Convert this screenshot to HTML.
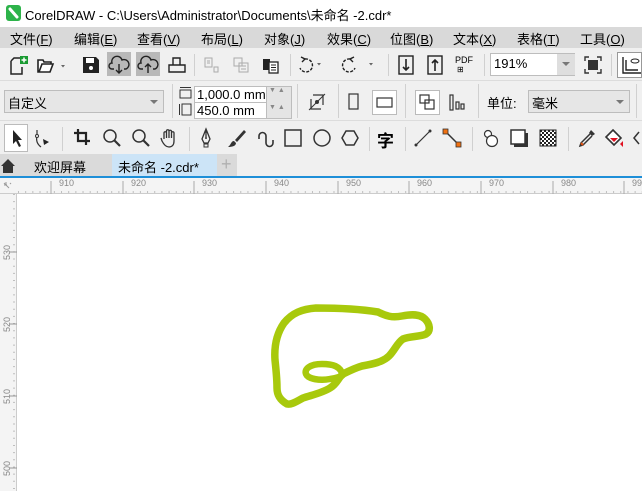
<!DOCTYPE html>
<html><head><meta charset="utf-8"><style>
*{margin:0;padding:0;box-sizing:border-box}
body{width:642px;height:491px;overflow:hidden;background:#fff;font-family:"Liberation Sans","Noto Sans CJK SC",sans-serif;font-size:13px;color:#000;position:relative}
.a{position:absolute}
.t{position:absolute;white-space:nowrap}
.sep{position:absolute;width:1px;background:#d0d0d0}
svg{position:absolute;overflow:visible}
</style></head><body>
<!-- title -->
<div class="a" style="left:0;top:0;width:642px;height:27px;background:#fff"></div>
<div class="a" style="left:6px;top:5px;width:15px;height:16px;background:#2db34a;border-radius:3px"></div>
<svg style="left:6px;top:5px" width="15" height="16"><path d="M4 4 L11 12" stroke="#fff" stroke-width="3" stroke-linecap="round"/></svg>
<div class="t" style="left:25px;top:5px;font-size:13px">CorelDRAW - C:\Users\Administrator\Documents\未命名 -2.cdr*</div>
<!-- menu -->
<div class="a" style="left:0;top:27px;width:642px;height:21px;background:#d9d9d9"></div>
<div class="t" style="left:10px;top:29px">文件(<u>F</u>)</div>
<div class="t" style="left:74px;top:29px">编辑(<u>E</u>)</div>
<div class="t" style="left:137px;top:29px">查看(<u>V</u>)</div>
<div class="t" style="left:201px;top:29px">布局(<u>L</u>)</div>
<div class="t" style="left:264px;top:29px">对象(<u>J</u>)</div>
<div class="t" style="left:327px;top:29px">效果(<u>C</u>)</div>
<div class="t" style="left:390px;top:29px">位图(<u>B</u>)</div>
<div class="t" style="left:453px;top:29px">文本(<u>X</u>)</div>
<div class="t" style="left:517px;top:29px">表格(<u>T</u>)</div>
<div class="t" style="left:580px;top:29px">工具(<u>O</u>)</div>
<!-- toolbar1 -->
<div class="a" style="left:0;top:48px;width:642px;height:33px;background:#f0f0f0;border-bottom:1px solid #dcdcdc"></div>
<svg style="left:8px;top:56px" width="20" height="20"><path d="M3 5 L6 2 H12 M3 5 V18 H14 V11" fill="none" stroke="#222" stroke-width="1.5"/><rect x="12" y="0" width="8" height="8" fill="#1a9b32"/><path d="M16 1.5 V6.5 M13.5 4 H18.5" stroke="#fff" stroke-width="1.5"/></svg>
<svg style="left:37px;top:58px" width="30" height="16"><path d="M1 2 H6 L7 4 H14 V6 H5 L2 14 H1 Z M5 6 H16 L13 14 H2" fill="#fff" stroke="#222" stroke-width="1.6"/><path d="M24 7 L28 7 L26 9.5 Z" fill="#666"/></svg>
<svg style="left:82px;top:56px" width="18" height="18"><path d="M1 1 H14 L17 4 V17 H1Z" fill="#222"/><rect x="4" y="2" width="8" height="5" fill="#fff"/><circle cx="9" cy="12" r="2" fill="#fff"/></svg>
<div class="a" style="left:107px;top:52px;width:24px;height:24px;background:#b8b8b8"></div>
<div class="a" style="left:136px;top:52px;width:24px;height:24px;background:#b8b8b8"></div>
<svg style="left:109px;top:56px" width="20" height="18"><path d="M5 13 H3 A3 3 0 0 1 3 7 A5 5 0 0 1 13 4 A4 4 0 0 1 17 13 H15" fill="none" stroke="#222" stroke-width="1.4"/><path d="M10 8 V17 M7 14 L10 17 L13 14" fill="none" stroke="#222" stroke-width="1.4"/></svg>
<svg style="left:138px;top:56px" width="20" height="18"><path d="M5 13 H3 A3 3 0 0 1 3 7 A5 5 0 0 1 13 4 A4 4 0 0 1 17 13 H15" fill="none" stroke="#222" stroke-width="1.4"/><path d="M10 17 V8 M7 11 L10 8 L13 11" fill="none" stroke="#222" stroke-width="1.4"/></svg>
<svg style="left:168px;top:56px" width="18" height="18"><path d="M5 9 V2 H12 V9 M1 9 H17 V16 H1Z" fill="none" stroke="#222" stroke-width="1.4"/></svg>
<div class="sep" style="left:194px;top:54px;height:22px"></div>
<svg style="left:204px;top:57px" width="16" height="16"><path d="M1 1 H8 V10 H1Z M3 4 H6 M3 6 H6 M10 10 H14 V15 H10Z" fill="none" stroke="#aaa"/></svg>
<svg style="left:233px;top:57px" width="16" height="16"><path d="M1 1 H9 V9 H1Z M6 6 H15 V15 H6Z M8 9 H13 M8 12 H13" fill="#f0f0f0" stroke="#aaa"/></svg>
<svg style="left:262px;top:56px" width="18" height="18"><path d="M1 3 H8 V14 H1Z" fill="#222"/><rect x="7" y="6" width="9" height="11" fill="#fff" stroke="#222" stroke-width="1.3"/><path d="M9 9 H14 M9 11.5 H14 M9 14 H14" stroke="#222"/></svg>
<div class="sep" style="left:290px;top:54px;height:22px"></div>
<svg style="left:297px;top:56px" width="30" height="18"><path d="M8 3 A6.5 6.5 0 1 1 3 12" fill="none" stroke="#222" stroke-width="1.4" stroke-dasharray="3 1.5"/><path d="M4 1 L8 3 L5 6" fill="none" stroke="#222" stroke-width="1.4"/><path d="M20 7 L24 7 L22 9.5Z" fill="#666"/></svg>
<svg style="left:340px;top:56px" width="34" height="18"><path d="M10 3 A6.5 6.5 0 1 0 15 12" fill="none" stroke="#222" stroke-width="1.4" stroke-dasharray="3 1.5"/><path d="M14 1 L10 3 L13 6" fill="none" stroke="#222" stroke-width="1.4"/><path d="M29 7 L33 7 L31 9.5Z" fill="#666"/></svg>
<div class="sep" style="left:388px;top:54px;height:22px"></div>
<svg style="left:398px;top:55px" width="16" height="20"><rect x="1" y="1" width="14" height="18" fill="none" stroke="#222" stroke-width="1.4"/><path d="M8 4 V15 M5 12 L8 15 L11 12" fill="none" stroke="#222" stroke-width="1.6"/></svg>
<svg style="left:427px;top:55px" width="16" height="20"><rect x="1" y="1" width="14" height="18" fill="none" stroke="#222" stroke-width="1.4"/><path d="M8 16 V5 M5 8 L8 5 L11 8" fill="none" stroke="#222" stroke-width="1.6"/></svg>
<div class="t" style="left:455px;top:55px;font-size:9px">PDF</div>
<div class="t" style="left:457px;top:65px;font-size:8px">⊞</div>
<div class="sep" style="left:484px;top:54px;height:22px"></div>
<div class="a" style="left:490px;top:53px;width:85px;height:23px;background:#fff;border:1px solid #bdbdbd"></div>
<div class="t" style="left:494px;top:56px">191%</div>
<div class="a" style="left:557px;top:54px;width:18px;height:21px;background:#dedede"></div>
<svg style="left:562px;top:62px" width="8" height="5"><path d="M0 0 H8 L4 4Z" fill="#777"/></svg>
<svg style="left:584px;top:56px" width="18" height="18"><rect x="4" y="4" width="10" height="10" fill="#333"/><path d="M1 5 V1 H5 M13 1 H17 V5 M17 13 V17 H13 M5 17 H1 V13" fill="none" stroke="#333" stroke-width="1.4"/></svg>
<div class="sep" style="left:611px;top:54px;height:22px"></div>
<div class="a" style="left:617px;top:52px;width:25px;height:26px;background:#fff;border:1px solid #999"></div>
<svg style="left:622px;top:56px" width="20" height="18"><path d="M1 1 V17 H19 M4 4 V14 H16" fill="none" stroke="#222" stroke-width="1.4"/><ellipse cx="13" cy="5" rx="4" ry="2" fill="none" stroke="#222"/></svg>
<!-- property bar -->
<div class="a" style="left:0;top:81px;width:642px;height:40px;background:#f0f0f0;border-bottom:1px solid #dcdcdc"></div>
<div class="a" style="left:4px;top:90px;width:160px;height:23px;background:#e6e6e6;border:1px solid #bdbdbd"></div>
<div class="t" style="left:8px;top:93px">自定义</div>
<svg style="left:150px;top:100px" width="8" height="5"><path d="M0 0 H8 L4 4Z" fill="#777"/></svg>
<div class="sep" style="left:172px;top:84px;height:34px"></div>
<svg style="left:178px;top:86px" width="15" height="30"><rect x="2" y="4" width="11" height="8" fill="none" stroke="#333"/><path d="M2 1.5 H13" stroke="#333"/><rect x="4" y="18" width="9" height="11" fill="none" stroke="#333"/><path d="M1.5 18 V29" stroke="#333"/></svg>
<div class="a" style="left:194px;top:86px;height:17px;background:#fff;border:1px solid #bdbdbd;width:73px"></div>
<div class="a" style="left:194px;top:102px;width:73px;height:17px;background:#fff;border:1px solid #bdbdbd"></div>
<div class="t" style="left:197px;top:87px">1,000.0 mm</div>
<div class="t" style="left:197px;top:103px">450.0 mm</div>
<div class="a" style="left:266px;top:86px;width:26px;height:33px;background:#e4e4e4;border:1px solid #bdbdbd"></div>
<div class="t" style="left:269px;top:87px;font-size:7px;color:#888">▼ ▲</div>
<div class="t" style="left:269px;top:104px;font-size:7px;color:#888">▼ ▲</div>
<div class="sep" style="left:297px;top:84px;height:34px"></div>
<svg style="left:308px;top:93px" width="18" height="18"><path d="M5 2 H15 V12 M13 16 H3 V6" fill="none" stroke="#333" stroke-width="1.2"/><circle cx="9" cy="9" r="2" fill="#333"/><path d="M1 17 L17 1" stroke="#333"/></svg>
<div class="sep" style="left:338px;top:84px;height:34px"></div>
<svg style="left:348px;top:93px" width="12" height="18"><rect x="1" y="1" width="9" height="15" fill="none" stroke="#333" stroke-width="1.2"/></svg>
<div class="a" style="left:372px;top:90px;width:25px;height:25px;background:#fff;border:1px solid #bbb"></div>
<svg style="left:376px;top:97px" width="18" height="12"><rect x="1" y="1" width="15" height="9" fill="none" stroke="#333" stroke-width="1.2"/></svg>
<div class="sep" style="left:405px;top:84px;height:34px"></div>
<div class="a" style="left:415px;top:90px;width:25px;height:25px;background:#fff;border:1px solid #bbb"></div>
<svg style="left:419px;top:94px" width="18" height="18"><rect x="1" y="1" width="9" height="8" fill="none" stroke="#333" stroke-width="1.2"/><rect x="6" y="6" width="9" height="9" fill="none" stroke="#333" stroke-width="1.2"/></svg>
<svg style="left:449px;top:94px" width="18" height="18"><rect x="1" y="1" width="3" height="15" fill="none" stroke="#333" stroke-width="1.2"/><rect x="7" y="8" width="3" height="7" fill="none" stroke="#333" stroke-width="1.2"/><rect x="12" y="10" width="3" height="5" fill="none" stroke="#333" stroke-width="1.2"/></svg>
<div class="sep" style="left:478px;top:84px;height:34px"></div>
<div class="t" style="left:487px;top:93px">单位:</div>
<div class="a" style="left:528px;top:90px;width:102px;height:23px;background:#e6e6e6;border:1px solid #bdbdbd"></div>
<div class="t" style="left:532px;top:93px">毫米</div>
<svg style="left:616px;top:100px" width="8" height="5"><path d="M0 0 H8 L4 4Z" fill="#777"/></svg>
<div class="sep" style="left:636px;top:84px;height:34px"></div>
<!-- toolbox -->
<div class="a" style="left:0;top:121px;width:642px;height:33px;background:#f0f0f0"></div>
<div class="a" style="left:4px;top:124px;width:24px;height:28px;background:#fff;border:1px solid #bbb"></div>
<svg style="left:10px;top:129px" width="16" height="20"><path d="M3 1 V15 L6 12 L9 18 L11 17 L8 11 H12Z" fill="#222"/></svg>
<svg style="left:33px;top:128px" width="22" height="22"><path d="M4 2 V8 M4 8 C3 12 4 16 8 19" fill="none" stroke="#333" stroke-width="1.2"/><circle cx="4" cy="8" r="1.5" fill="#fff" stroke="#333"/><path d="M10 11 L16 14 L11 17Z" fill="#222"/></svg>
<div class="sep" style="left:62px;top:127px;height:24px"></div>
<svg style="left:73px;top:128px" width="20" height="20"><path d="M5 1 V13 H17 M1 5 H13 V17" fill="none" stroke="#222" stroke-width="2.2"/></svg>
<svg style="left:102px;top:128px" width="22" height="22"><circle cx="8" cy="8" r="6" fill="none" stroke="#333" stroke-width="1.5"/><path d="M12 12 L18 18" stroke="#333" stroke-width="2.2"/></svg>
<svg style="left:131px;top:128px" width="22" height="22"><circle cx="8" cy="8" r="6" fill="none" stroke="#333" stroke-width="1.5"/><path d="M12 12 L18 18" stroke="#333" stroke-width="2.2"/></svg>
<svg style="left:159px;top:128px" width="22" height="22"><path d="M5 11 V5 A1.2 1.2 0 0 1 7.5 5 V10 V3 A1.2 1.2 0 0 1 10 3 V10 V3.5 A1.2 1.2 0 0 1 12.5 3.5 V10 V5 A1.2 1.2 0 0 1 15 5 V13 C15 17 13 19 10 19 C7 19 5 17 3 13 L2 10" fill="none" stroke="#333" stroke-width="1.3"/></svg>
<div class="sep" style="left:189px;top:127px;height:24px"></div>
<svg style="left:198px;top:128px" width="18" height="22"><path d="M8 1 L4 11 L6 15 H10 L12 11Z M8 1 V9" fill="none" stroke="#333" stroke-width="1.3"/><circle cx="8" cy="10" r="1" fill="#333"/><path d="M6 16 H10 V19 H6Z" fill="none" stroke="#333"/></svg>
<svg style="left:226px;top:128px" width="22" height="22"><path d="M18 2 L9 12 L11 14 L20 4Z" fill="#333"/><path d="M8 13 C5 13 5 17 2 19 C6 19 10 18 10 15Z" fill="#333"/></svg>
<svg style="left:255px;top:128px" width="20" height="22"><path d="M4 8 A3.5 3.5 0 0 1 11 8 V15 A3.5 3.5 0 0 0 18 15 V12" fill="none" stroke="#333" stroke-width="1.6"/><path d="M4 8 V11" stroke="#333" stroke-width="1.6"/></svg>
<svg style="left:284px;top:129px" width="20" height="20"><rect x="1" y="1" width="16" height="16" fill="none" stroke="#333" stroke-width="1.5"/></svg>
<svg style="left:313px;top:129px" width="20" height="20"><circle cx="9" cy="9" r="8" fill="none" stroke="#333" stroke-width="1.5"/></svg>
<svg style="left:341px;top:129px" width="20" height="20"><path d="M5 2 H13 L17 9 L13 16 H5 L1 9Z" fill="none" stroke="#333" stroke-width="1.5"/></svg>
<div class="sep" style="left:369px;top:127px;height:24px"></div>
<div class="t" style="left:377px;top:127px;font-size:17px;font-weight:bold">字</div>
<div class="sep" style="left:405px;top:127px;height:24px"></div>
<svg style="left:414px;top:129px" width="20" height="20"><path d="M2 16 L16 2" stroke="#333" stroke-width="1.2"/><circle cx="2" cy="16" r="1.5" fill="#333"/><circle cx="16" cy="2" r="1.5" fill="#333"/></svg>
<svg style="left:443px;top:129px" width="20" height="20"><path d="M3 3 L15 15" stroke="#333" stroke-width="1.5"/><rect x="0" y="0" width="5" height="5" fill="#f07010" stroke="#333" stroke-width=".8"/><rect x="13" y="13" width="5" height="5" fill="#f07010" stroke="#333" stroke-width=".8"/></svg>
<div class="sep" style="left:472px;top:127px;height:24px"></div>
<svg style="left:482px;top:129px" width="20" height="20"><circle cx="6" cy="5" r="3.5" fill="#fff" stroke="#333" stroke-width="1.2"/><circle cx="10" cy="12" r="5.5" fill="#fff" stroke="#333" stroke-width="1.2"/></svg>
<svg style="left:510px;top:129px" width="20" height="20"><rect x="4" y="4" width="14" height="14" fill="#333"/><rect x="1" y="1" width="14" height="14" fill="#fff" stroke="#333" stroke-width="1.5"/></svg>
<svg style="left:540px;top:130px" width="18" height="18"><defs><pattern id="c" width="4" height="4" patternUnits="userSpaceOnUse"><rect width="4" height="4" fill="#fff"/><rect width="2" height="2" fill="#222"/><rect x="2" y="2" width="2" height="2" fill="#222"/></pattern></defs><rect x="0" y="0" width="16" height="16" fill="url(#c)" stroke="#222"/></svg>
<div class="sep" style="left:568px;top:127px;height:24px"></div>
<svg style="left:577px;top:128px" width="20" height="22"><path d="M14 2 L18 6 L15 8 L12 5Z" fill="#333"/><path d="M13 6 L4 15 L3 18 L6 17 L15 8" fill="none" stroke="#333" stroke-width="1.5"/><path d="M4 15 L6 17" stroke="#e05010" stroke-width="2"/></svg>
<svg style="left:604px;top:128px" width="22" height="22"><path d="M9 2 L17 10 L10 17 L2 9Z" fill="#fff" stroke="#333" stroke-width="1.6"/><path d="M6 10 H14 L10 14Z" fill="#e01020"/><path d="M16 16 L19 19 L19 13Z" fill="#e01020"/></svg>
<svg style="left:632px;top:130px" width="14" height="18"><path d="M7 2 L2 8 L7 14" fill="none" stroke="#333" stroke-width="1.5"/></svg>
<!-- tabs -->
<div class="a" style="left:0;top:154px;width:642px;height:22px;background:#f0f0f0"></div>
<div class="a" style="left:0;top:154px;width:112px;height:22px;background:#dadada"></div>
<svg style="left:0px;top:157px" width="18" height="18"><path d="M1 9 L8 2 L15 9 H13 V16 H3 V9Z" fill="#333"/></svg>
<div class="t" style="left:34px;top:157px">欢迎屏幕</div>
<div class="a" style="left:112px;top:154px;width:105px;height:22px;background:#cce4f7"></div>
<div class="t" style="left:118px;top:157px">未命名 -2.cdr*</div>
<div class="a" style="left:217px;top:154px;width:20px;height:22px;background:#dadada"></div>
<div class="t" style="left:221px;top:154px;font-size:18px;color:#b0b0b0">+</div>
<div class="a" style="left:0;top:176px;width:642px;height:2px;background:#1e8fd8"></div>
<!-- rulers -->
<div class="a" style="left:0;top:178px;width:642px;height:16px;background:#f4f4f4;border-bottom:1px solid #ccc"></div>
<div class="a" style="left:0;top:194px;width:17px;height:297px;background:#f4f4f4;border-right:1px solid #ccc"></div>
<svg style="left:0;top:178px" width="642" height="16">
<path d="M4 5 L9 10 M6 4 V7 M4 7 H7 M10 6 L11 5" stroke="#999" fill="none"/>
<g font-family="Liberation Sans" font-size="9" fill="#888">
<text x="59" y="8">910</text><text x="131" y="8">920</text><text x="202" y="8">930</text><text x="274" y="8">940</text><text x="346" y="8">950</text><text x="417" y="8">960</text><text x="489" y="8">970</text><text x="561" y="8">980</text><text x="632" y="8">990</text></g>
<path d="M51 3 V16 M123 3 V16 M194 3 V16 M266 3 V16 M338 3 V16 M409 3 V16 M481 3 V16 M553 3 V16 M624 3 V16" stroke="#aaa"/>
<path d="M18 14 H642" stroke="#888" stroke-width="1" stroke-dasharray="1 6.17"/>
</svg>
<svg style="left:0;top:194px" width="17" height="297">
<g font-family="Liberation Sans" font-size="9" fill="#888">
<text transform="translate(10,66) rotate(-90)">530</text>
<text transform="translate(10,138) rotate(-90)">520</text>
<text transform="translate(10,210) rotate(-90)">510</text>
<text transform="translate(10,282) rotate(-90)">500</text></g>
<path d="M9 58 H17 M9 130 H17 M9 202 H17 M9 274 H17" stroke="#999"/>
<path d="M14 0 V297" stroke="#888" stroke-dasharray="1 6.17"/>
</svg>
<!-- liver -->
<svg style="left:0;top:0" width="642" height="491">
<path d="M287 404 C280 400 277 395 277 388 C277 378 276 370 275 360 C274 345 277 333 284 323 C292 313 302 309 316 308 C335 308 360 309 378 312 C386 316 392 318 402 316 C412 314 420 314 425 319 C430 324 431 331 426 334 C420 337 410 336 403 339 C397 343 395 350 389 356 C383 362 373 364 362 366 C355 368 349 371 343 374 C338 378 337 384 330 388 C322 393 312 395 303 398 C297 401 292 405 287 404 Z" fill="none" stroke="#a8c90c" stroke-width="7.5" stroke-linejoin="round"/>
<path d="M343 375 C340 366 333 364 322 364 C310 364 304 369 306 374 C308 379 320 381 330 379 C338 378 342 376 343 375" fill="none" stroke="#a8c90c" stroke-width="6.5"/>
</svg>
</body></html>
